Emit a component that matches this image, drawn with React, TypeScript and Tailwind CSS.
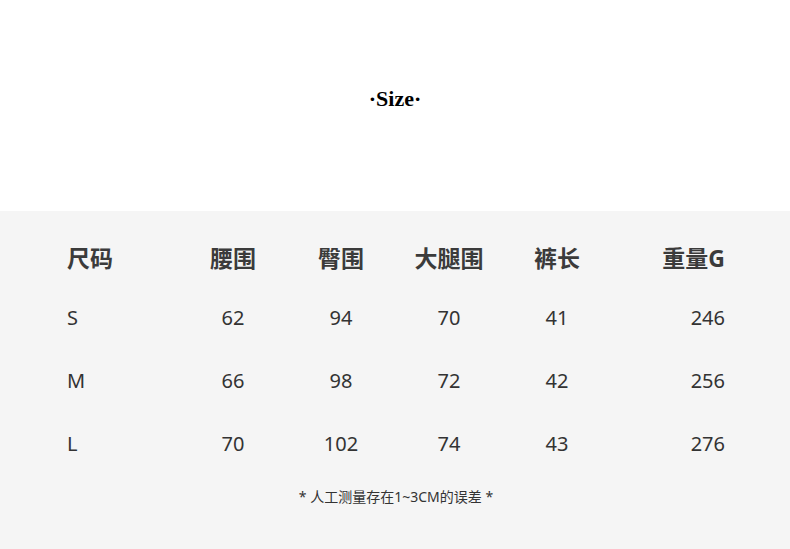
import React from "react";

const rows = [
  ["S", "62", "94", "70", "41", "246"],
  ["M", "66", "98", "72", "42", "256"],
  ["L", "70", "102", "74", "43", "276"],
];

const headers = ["尺码", "腰围", "臀围", "大腿围", "裤长", "重量G"];

const cellAlign = (i: number) =>
  i === 0 ? "text-left" : i === 5 ? "text-right" : "text-center";

export default function App() {
  return (
    <div
      className="w-[790px] h-[549px] bg-white overflow-hidden"
      style={{ fontFamily: '"Noto Sans", "Noto Sans CJK SC", sans-serif' }}
    >
      {/* title */}
      <div className="h-[211px] flex items-center justify-center pb-[14px]">
        <h1 className="text-[22px] font-bold text-black font-['Liberation_Serif',serif] leading-none">
          ·Size·
        </h1>
      </div>

      {/* table */}
      <div className="h-[338px] bg-[#f5f5f5] pt-[19px] pl-[67px] pr-[65px]">
        <div className="grid grid-cols-[112px_108px_108px_108px_108px_1fr] h-[56px] items-center">
          {headers.map((h, i) => (
            <div
              key={h}
              className={`${cellAlign(i)} text-[23px] font-bold text-[#3b3b3b] leading-none`}
            >
              {h}
            </div>
          ))}
        </div>
        {rows.map((r) => (
          <div
            key={r[0]}
            className="grid grid-cols-[112px_108px_108px_108px_108px_1fr] h-[63px] items-center"
          >
            {r.map((v, i) => (
              <div
                key={i}
                className={`${cellAlign(i)} text-[20px] text-[#333] leading-none`}
              >
                {v}
              </div>
            ))}
          </div>
        ))}
        <p className="mt-[13px] text-center text-[14px] text-[#333] leading-[18px]">
          * 人工测量存在1~3CM的误差 *
        </p>
      </div>
    </div>
  );
}
